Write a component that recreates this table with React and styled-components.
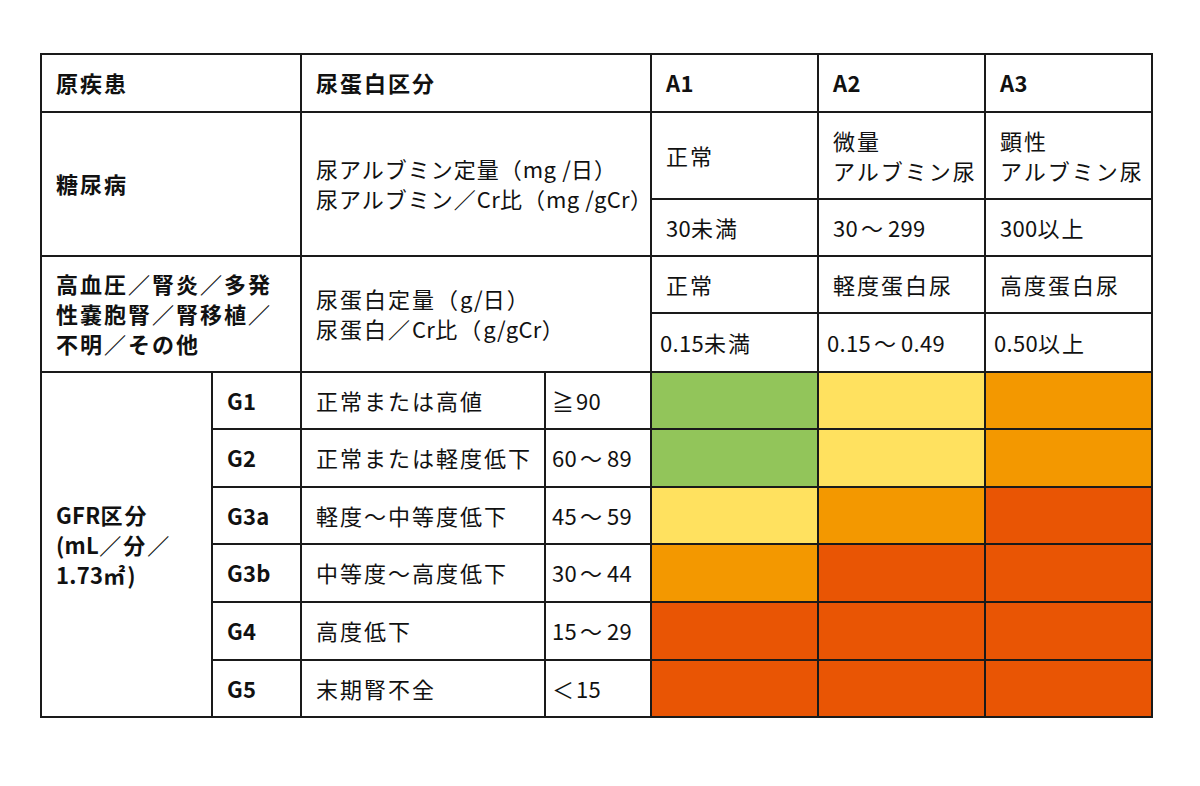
import React from 'react';
import styled, { createGlobalStyle } from 'styled-components';

const GlobalStyle = createGlobalStyle`
    html, body {
        margin: 0;
        padding: 0;
        background: #fff;
    }
    body {
        font-family: "Noto Sans CJK JP", "Noto Sans", sans-serif;
        color: #111;
    }
`;

const Page = styled.div`
    width: 1200px;
    height: 786px;
    padding: 53px 0 0 40px;
    box-sizing: border-box;
`;

const Table = styled.table`
    border-collapse: collapse;
    table-layout: fixed;
    width: 1111px;
    border: 2px solid #1a1a1a;
`;

const Col = styled.col`
    width: ${p => p.$w}px;
`;

const Row = styled.tr`
    height: ${p => p.$h}px;
`;

const Cell = styled.td`
    border: 2px solid #1a1a1a;
    padding: 0 0 2px ${p => p.$pad ?? 14}px;
    font-size: 22px;
    line-height: 30px;
    letter-spacing: ${p => (p.$tight ? 1 : 2)}px;
    font-weight: ${p => (p.$bold ? 700 : 400)};
    vertical-align: middle;
    white-space: nowrap;
    background: ${p => p.$bg || '#fff'};
`;

const Latin = styled.span`
    font-size: 22px;
    letter-spacing: 0.3px;
`;

const Tilde = styled.span`
    margin: 0 3px;
`;

// ascii runs get tighter spacing, spaced tildes become a wider range mark
const fmt = text =>
    text.split(/( ～ |[\x21-\x7E]+)/).map((part, i) => {
        if (part === ' ～ ') return <Tilde key={i}>～</Tilde>;
        if (/^[\x21-\x7E]+$/.test(part)) return <Latin key={i}>{part}</Latin>;
        return part;
    });

const colors = {
    green: '#92c55a',
    yellow: '#ffe15f',
    orange: '#f39800',
    red: '#e95504',
};

const gfrRows = [
    { g: 'G1', label: '正常または高値', value: '≧90', h: 57, c: ['green', 'yellow', 'orange'] },
    { g: 'G2', label: '正常または軽度低下', value: '60 ～ 89', h: 58, c: ['green', 'yellow', 'orange'] },
    { g: 'G3a', label: '軽度～中等度低下', value: '45 ～ 59', h: 57, c: ['yellow', 'orange', 'red'] },
    { g: 'G3b', label: '中等度～高度低下', value: '30 ～ 44', h: 58, c: ['orange', 'red', 'red'] },
    { g: 'G4', label: '高度低下', value: '15 ～ 29', h: 58, c: ['red', 'red', 'red'] },
    { g: 'G5', label: '末期腎不全', value: '＜15', h: 57, c: ['red', 'red', 'red'] },
];

export default function App() {
    return (
        <Page>
            <GlobalStyle />
            <Table>
                <colgroup>
                    <Col $w={171} />
                    <Col $w={89} />
                    <Col $w={244} />
                    <Col $w={106} />
                    <Col $w={167} />
                    <Col $w={167} />
                    <Col $w={167} />
                </colgroup>
                <tbody>
                    <Row $h={58}>
                        <Cell colSpan={2} $bold>原疾患</Cell>
                        <Cell colSpan={2} $bold>尿蛋白区分</Cell>
                        <Cell $bold>{fmt('A1')}</Cell>
                        <Cell $bold>{fmt('A2')}</Cell>
                        <Cell $bold>{fmt('A3')}</Cell>
                    </Row>
                    <Row $h={87}>
                        <Cell colSpan={2} rowSpan={2} $bold>糖尿病</Cell>
                        <Cell colSpan={2} rowSpan={2} $tight>
                            {fmt('尿アルブミン定量（mg /日）')}<br />
                            {fmt('尿アルブミン／Cr比（mg /gCr）')}
                        </Cell>
                        <Cell>正常</Cell>
                        <Cell>微量<br />アルブミン尿</Cell>
                        <Cell>顕性<br />アルブミン尿</Cell>
                    </Row>
                    <Row $h={57}>
                        <Cell>{fmt('30未満')}</Cell>
                        <Cell>{fmt('30 ～ 299')}</Cell>
                        <Cell>{fmt('300以上')}</Cell>
                    </Row>
                    <Row $h={57}>
                        <Cell colSpan={2} rowSpan={2} $bold>
                            高血圧／腎炎／多発<br />
                            性嚢胞腎／腎移植／<br />
                            不明／その他
                        </Cell>
                        <Cell colSpan={2} rowSpan={2}>
                            {fmt('尿蛋白定量（g/日）')}<br />
                            {fmt('尿蛋白／Cr比（g/gCr）')}
                        </Cell>
                        <Cell>正常</Cell>
                        <Cell>軽度蛋白尿</Cell>
                        <Cell>高度蛋白尿</Cell>
                    </Row>
                    <Row $h={59}>
                        <Cell $pad={8}>{fmt('0.15未満')}</Cell>
                        <Cell $pad={8}>{fmt('0.15 ～ 0.49')}</Cell>
                        <Cell $pad={8}>{fmt('0.50以上')}</Cell>
                    </Row>
                    {gfrRows.map((r, i) => (
                        <Row key={r.g} $h={r.h}>
                            {i === 0 && (
                                <Cell rowSpan={6} $bold>
                                    {fmt('GFR区分')}<br />
                                    {fmt('(mL／分／')}<br />
                                    {fmt('1.73㎡)')}
                                </Cell>
                            )}
                            <Cell $bold>{fmt(r.g)}</Cell>
                            <Cell>{r.label}</Cell>
                            <Cell $pad={6}>{fmt(r.value)}</Cell>
                            {r.c.map((c, j) => (
                                <Cell key={j} $bg={colors[c]} />
                            ))}
                        </Row>
                    ))}
                </tbody>
            </Table>
        </Page>
    );
}
